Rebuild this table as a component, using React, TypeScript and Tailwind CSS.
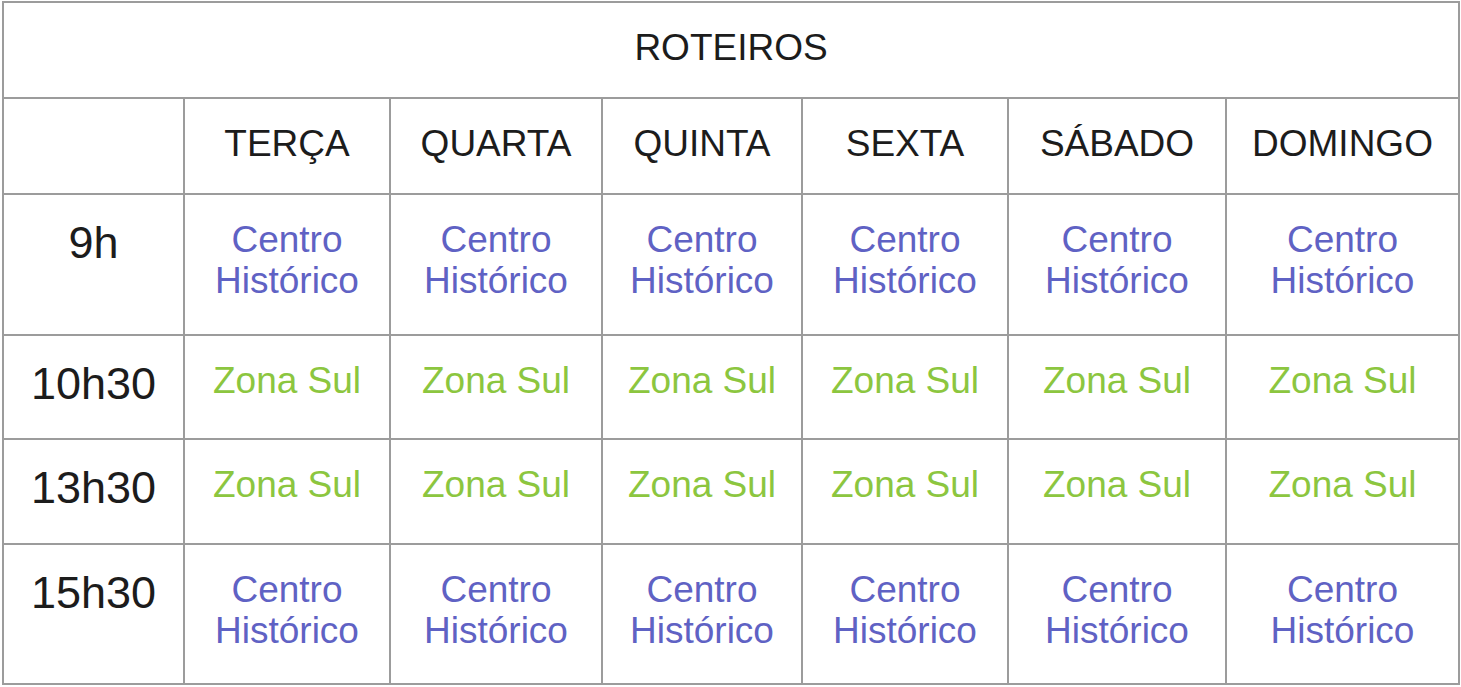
const days = ['TERÇA', 'QUARTA', 'QUINTA', 'SEXTA', 'SÁBADO', 'DOMINGO']

type Tour = 'centro' | 'sul'

const rows: { time: string; tour: Tour }[] = [
  { time: '9h', tour: 'centro' },
  { time: '10h30', tour: 'sul' },
  { time: '13h30', tour: 'sul' },
  { time: '15h30', tour: 'centro' },
]

function TourLabel({ tour }: { tour: Tour }) {
  if (tour === 'centro') {
    return (
      <p className="text-[#5f62c4]">
        Centro
        <br />
        Histórico
      </p>
    )
  }
  return <p className="text-[#8cc63f]">Zona Sul</p>
}

export default function App() {
  return (
    <div className="min-h-screen bg-white pl-[2px] pt-[1px] font-['Liberation_Sans',Arial,sans-serif]">
      <div className="grid w-[1458px] grid-cols-[179px_204px_210px_198px_204px_216px_231px] grid-rows-[94px_94px_139px_102px_103px_138px] gap-[2px] bg-[#9c9c9c] p-[2px] text-center text-[37px] leading-[41px] text-[#1c1c1c]">
        <div className="col-span-7 bg-white pt-6">ROTEIROS</div>

        <div className="bg-white" />
        {days.map((d) => (
          <div key={d} className="bg-white pt-6">
            {d}
          </div>
        ))}

        {rows.map((r) => (
          <div key={r.time} className="contents">
            <div className="bg-white pt-[25px] text-[45px] leading-[45px]">{r.time}</div>
            {days.map((d) => (
              <div key={d} className="bg-white pt-6">
                <TourLabel tour={r.tour} />
              </div>
            ))}
          </div>
        ))}
      </div>
    </div>
  )
}
